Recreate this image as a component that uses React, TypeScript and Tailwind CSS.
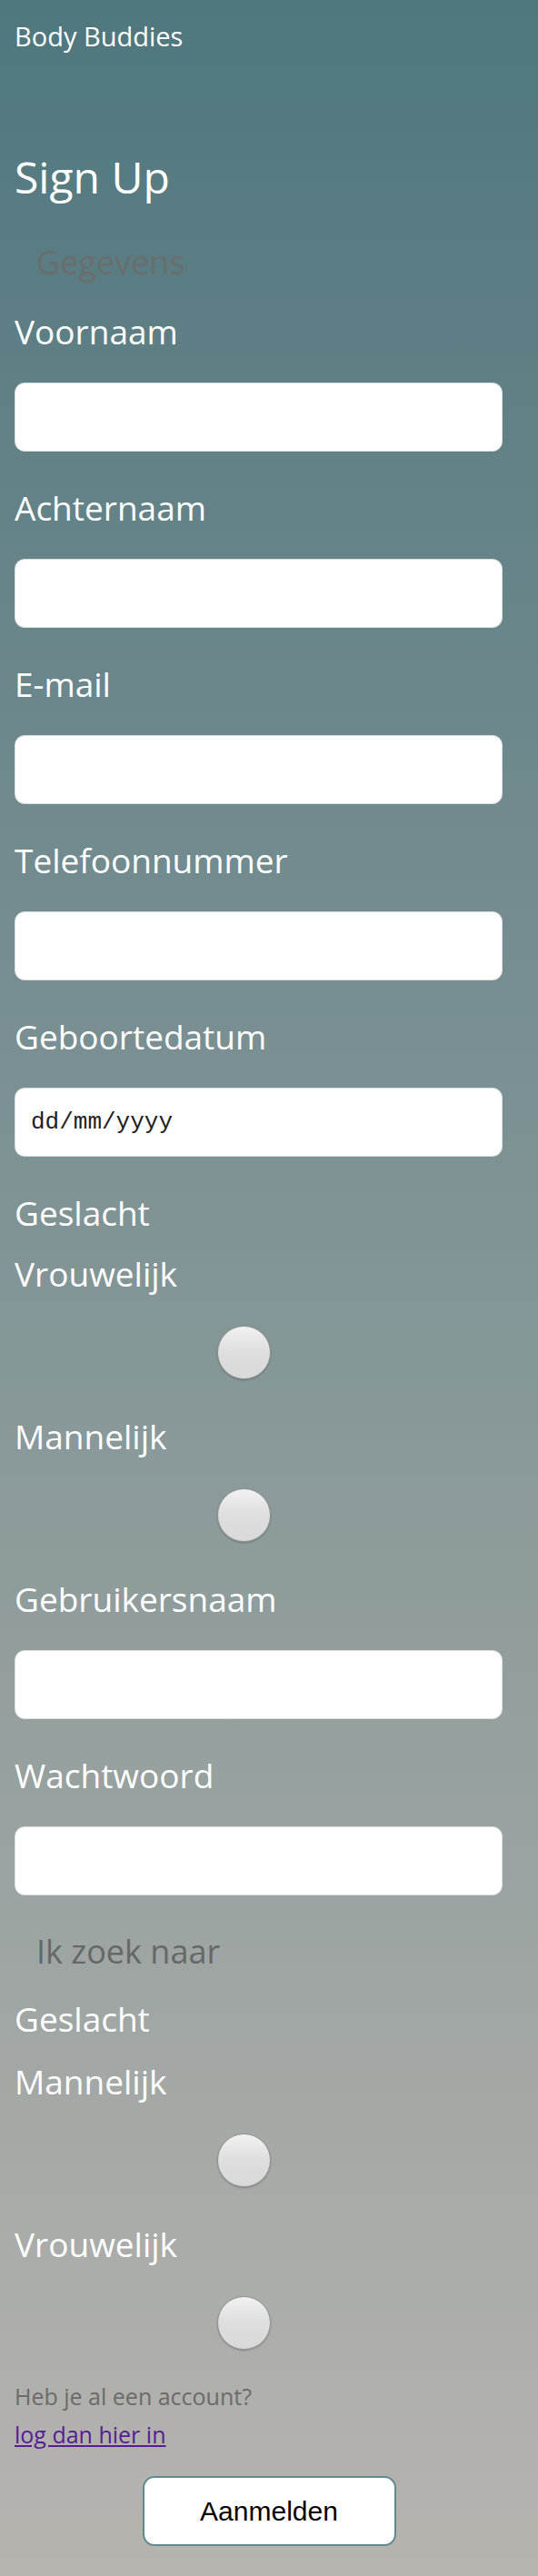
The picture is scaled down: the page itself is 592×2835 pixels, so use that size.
import React from "react";

function Field({ label, date }: { label: string; date?: boolean }) {
  return (
    <div className="mb-[37px]">
      <label className="block text-[37px] leading-[50px] text-white">{label}</label>
      {date ? (
        <div className="mt-[31px] flex h-[76px] w-[537px] items-center rounded-[11px] border border-[#d9dddd] bg-white pl-[17px] font-['Liberation_Mono',monospace] text-[26px] text-[#1f1f1f]">
          dd/mm/yyyy
        </div>
      ) : (
        <input
          type="text"
          className="mt-[31px] block h-[76px] w-[537px] rounded-[11px] border border-[#d9dddd] bg-white px-4 text-[26px] text-black outline-none"
        />
      )}
    </div>
  );
}

function Radio({ label, name }: { label: string; name: string }) {
  return (
    <div className="mb-[38px]">
      <label className="block text-[37px] leading-[50px] text-white">{label}</label>
      <input
        type="radio"
        name={name}
        className="mt-[32px] ml-[223px] block h-[59px] w-[59px] appearance-none rounded-full border border-[#8e9494] bg-linear-to-b from-[#f1f1f1] via-[#dedede] to-[#d9d9d9] shadow-[0_1px_2px_rgba(0,0,0,0.25)]"
      />
    </div>
  );
}

export default function App() {
  return (
    <div className="min-h-[2835px] bg-linear-to-b from-[#4f777e] to-[#b7b4af] px-4 pt-[20px] pb-[32px] font-['Open_Sans','Noto_Sans',sans-serif]">
      <p className="text-[29px] leading-[40px] text-white">Body Buddies</p>

      <h1 className="mt-[105px] text-[48px] font-medium leading-[60px] text-white">Sign Up</h1>

      <form>
        <h2 className="mt-[39px] pl-[24px] text-[36px] leading-[50px] text-[#6a6d6e]">Gegevens</h2>
        <div className="mt-[26px]">
          <Field label="Voornaam" />
          <Field label="Achternaam" />
          <Field label="E-mail" />
          <Field label="Telefoonnummer" />
          <Field label="Geboortedatum" date />

          <p className="text-[37px] leading-[50px] text-white">Geslacht</p>
          <div className="mt-[17px]">
            <Radio label="Vrouwelijk" name="geslacht" />
            <Radio label="Mannelijk" name="geslacht" />
          </div>

          <Field label="Gebruikersnaam" />
          <Field label="Wachtwoord" />
        </div>

        <h2 className="mt-[1px] pl-[24px] text-[36px] leading-[50px] text-[#666867]">Ik zoek naar</h2>
        <p className="mt-[24px] text-[37px] leading-[50px] text-white">Geslacht</p>
        <div className="mt-[19px]">
          <Radio label="Mannelijk" name="zoek" />
          <div className="-mb-[4px]">
            <Radio label="Vrouwelijk" name="zoek" />
          </div>
        </div>

        <p className="text-[25px] leading-[34px] text-[#6b6b6b]">Heb je al een account?</p>
        <a href="#" className="mt-[8px] block w-fit text-[25px] leading-[34px] text-[#561d94] underline">
          log dan hier in
        </a>

        <div className="mt-[29px] flex justify-center">
          <button
            type="button"
            className="h-[77px] w-[279px] rounded-[13px] border-2 border-[#5f8a92] bg-white font-['Liberation_Sans',Arial,sans-serif] text-[30px] text-black"
          >
            Aanmelden
          </button>
        </div>
      </form>
    </div>
  );
}
